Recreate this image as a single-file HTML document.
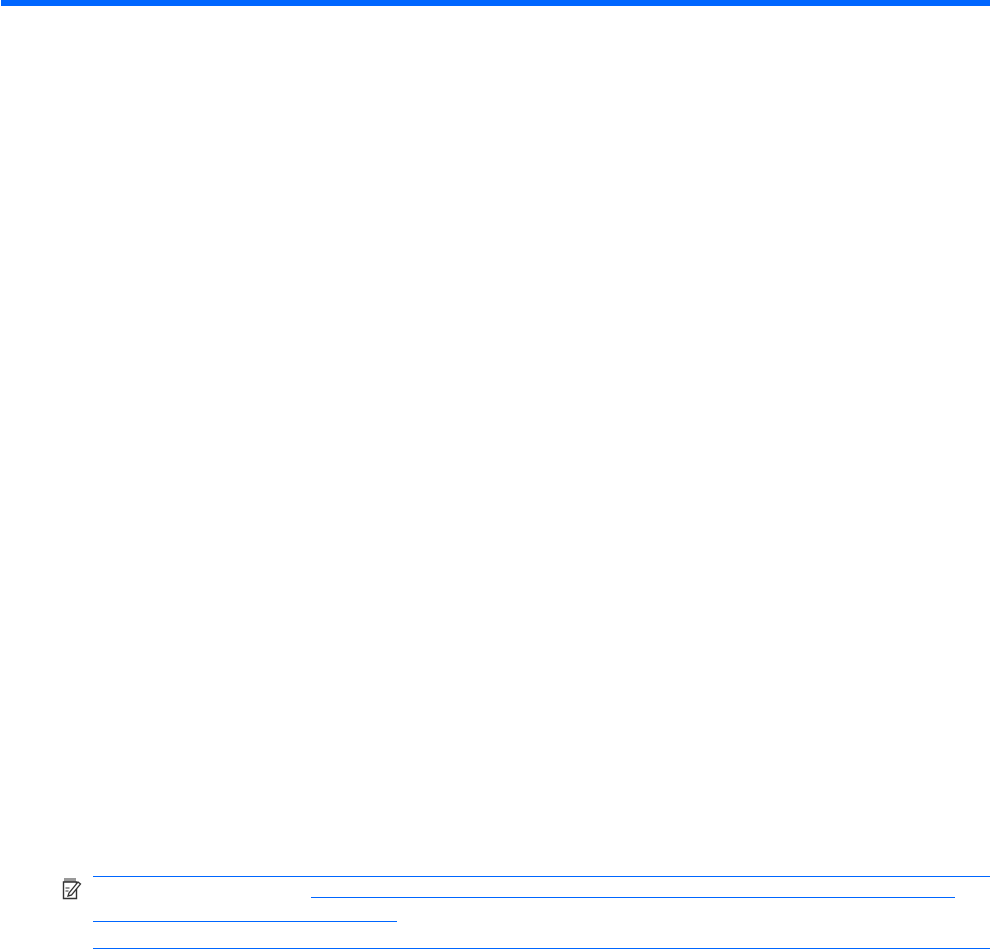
<!DOCTYPE html>
<html><head><style>
body{margin:0;width:993px;height:950px;background:#fff;position:relative;overflow:hidden;font-family:"Liberation Sans",sans-serif}
.l{position:absolute;background:#0066ff}
</style></head><body>
<div class="l" style="left:1px;top:0;width:989px;height:6px"></div>
<div class="l" style="left:93px;top:876px;width:897px;height:1px"></div>
<div class="l" style="left:311px;top:897px;width:644px;height:1px"></div>
<div class="l" style="left:93px;top:921px;width:304px;height:1px"></div>
<div class="l" style="left:93px;top:948px;width:897px;height:1px"></div>
<svg style="position:absolute;left:62px;top:877px" width="20" height="23" viewBox="0 0 20 23">
<path d="M1.5 5h13v16.5h-13z" fill="none" stroke="#333" stroke-width="1.4"/>
<path d="M3 1v4M5 1v4M7 1v4M9 1v4M11 1v4M13 1v4" stroke="#333" stroke-width="1"/>
<path d="M7 16l9-11 2.5 2-9 11-3.5 1z" fill="#fff" stroke="#333" stroke-width="1.3"/>
<path d="M3.5 11h4M3.5 14h3" stroke="#333" stroke-width="1"/>
</svg>
</body></html>
